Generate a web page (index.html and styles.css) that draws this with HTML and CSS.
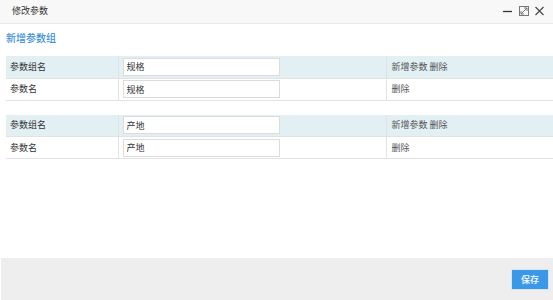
FILE: index.html
```html
<!DOCTYPE html>
<html lang="zh-CN">
<head>
  <meta charset="UTF-8">
  <title>修改参数</title>
  <link rel="stylesheet" href="styles.css">
</head>
<body>
  <div class="dialog">
    <div class="dialog-head">
      <span class="dialog-title">修改参数</span>
      <div class="dialog-tools">
        <svg class="tool" width="10" height="10" viewBox="0 0 10 10"><path d="M0 5.5h9" stroke="#333" stroke-width="1.3"/></svg>
        <svg class="tool" width="10" height="10" viewBox="0 0 10 10"><rect x="0.5" y="0.5" width="9" height="9" fill="none" stroke="#777"/><path d="M2 8L8 2M5 2h3v3M2 5v3h3" fill="none" stroke="#777"/></svg>
        <svg class="tool" width="9" height="10" viewBox="0 0 9 10"><path d="M0.5 1l8 8M8.5 1l-8 8" stroke="#444" stroke-width="1.1"/></svg>
      </div>
    </div>

    <div class="dialog-body">
      <a class="add-group" href="#">新增参数组</a>

      <table class="param-table">
        <tr class="group-row">
          <td class="col-label">参数组名</td>
          <td class="col-input"><input type="text" value="规格"></td>
          <td class="col-action">新增参数 删除</td>
        </tr>
        <tr>
          <td class="col-label">参数名</td>
          <td class="col-input"><input type="text" value="规格"></td>
          <td class="col-action">删除</td>
        </tr>
      </table>

      <table class="param-table">
        <tr class="group-row">
          <td class="col-label">参数组名</td>
          <td class="col-input"><input type="text" value="产地"></td>
          <td class="col-action">新增参数 删除</td>
        </tr>
        <tr>
          <td class="col-label">参数名</td>
          <td class="col-input"><input type="text" value="产地"></td>
          <td class="col-action">删除</td>
        </tr>
      </table>
    </div>

    <div class="dialog-foot">
      <button class="btn-save">保存</button>
    </div>
  </div>
</body>
</html>
```

FILE: styles.css
```css
* {
  margin: 0;
  padding: 0;
  box-sizing: border-box;
}

body {
  font-family: "Noto Sans CJK SC", "Liberation Sans", sans-serif;
  font-size: 9px;
  color: #333;
  background-color: #fff;
}

.dialog {
  width: 553px;
  height: 300px;
  display: flex;
  flex-direction: column;
  overflow: hidden;
}

/* Header */
.dialog-head {
  height: 24px;
  flex-shrink: 0;
  display: flex;
  align-items: center;
  justify-content: space-between;
  padding: 0 9px 0 12px;
  background-color: #f8f8f8;
  border-bottom: 1px solid #e8e8e8;
}

.dialog-title {
  font-size: 9px;
  color: #333;
  margin-top: -3px;
}

.dialog-tools {
  display: flex;
  gap: 6px;
  margin-top: -2px;
}

.tool {
  display: block;
}

/* Body */
.dialog-body {
  padding: 6px 0 0 6px;
}

.add-group {
  display: block;
  color: #3d8fd9;
  font-size: 10px;
  font-weight: 500;
  text-decoration: none;
  line-height: 15px;
  margin-bottom: 11px;
}

.param-table {
  width: 547px;
  border-collapse: collapse;
  table-layout: fixed;
  margin-bottom: 14px;
}

.param-table td {
  height: 22px;
  border-bottom: 1px solid #e2e2e2;
  vertical-align: middle;
  line-height: 12px;
}

.param-table .group-row td {
  background-color: #e2f0f3;
}

.col-label {
  width: 112px;
  padding-left: 4px;
  border-right: 1px solid #e2e2e2;
}

.col-input {
  width: 268px;
  padding-left: 4px;
  border-right: 1px solid #e2e2e2;
}

.col-action {
  padding-left: 5px;
  color: #555;
}

.col-input input {
  display: block;
  width: 157px;
  height: 18px;
  border: 1px solid #dcdcdc;
  background-color: #fff;
  padding-left: 3px;
  font-family: inherit;
  font-size: 9px;
  color: #333;
}

/* Footer */
.dialog-foot {
  margin-top: auto;
  margin-left: 1px;
  height: 42px;
  flex-shrink: 0;
  display: flex;
  align-items: center;
  justify-content: flex-end;
  padding-right: 4px;
  background-color: #eeeeee;
}

.btn-save {
  width: 38px;
  height: 21px;
  border: 1px solid #d8e6f3;
  background-color: #3b97e8;
  color: #fff;
  font-family: inherit;
  font-size: 9px;
  font-weight: 500;
  margin-top: 1px;
}
```
